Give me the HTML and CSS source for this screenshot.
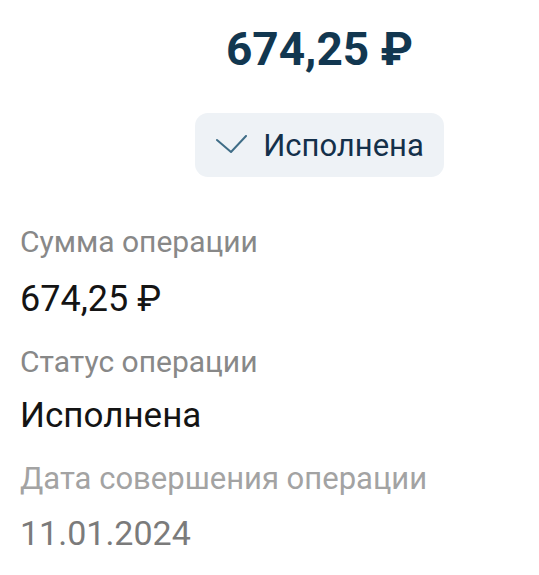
FILE: index.html
```html
<!DOCTYPE html>
<html lang="ru">

<head>
    <meta charset="UTF-8">
    <meta name="viewport" content="width=device-width, initial-scale=1.0">
    <title>Операция</title>
    <link rel="stylesheet" href="styles.css">
</head>

<body>
    <div class="header">
        <div class="amount">674,25 ₽</div>
        <div class="badge">
            <svg class="badge-icon" width="32" height="20" viewBox="0 0 32 20">
                <polyline points="1,5 15,17 30,1" fill="none" stroke="#3f6d87" stroke-width="2"
                    stroke-linecap="round" stroke-linejoin="round" />
            </svg>
            <span>Исполнена</span>
        </div>
    </div>

    <div class="fields">
        <div class="field">
            <div class="label">Сумма операции</div>
            <div class="value value-sum">674,25 ₽</div>
        </div>
        <div class="field">
            <div class="label">Статус операции</div>
            <div class="value value-text">Исполнена</div>
        </div>
        <div class="field field-faded">
            <div class="label">Дата совершения операции</div>
            <div class="value">11.01.2024</div>
        </div>
    </div>
</body>

</html>
```

FILE: styles.css
```css
body {
    margin: 0;
    background-color: #fff;
    font-family: Roboto, "Noto Sans", sans-serif;
    color: #111;
}

.header {
    padding: 21px 0 0 100px;
    display: flex;
    flex-direction: column;
    align-items: center;
}

.amount {
    font-size: 46px;
    line-height: 56px;
    font-weight: 700;
    color: #123750;
}

.badge {
    margin-top: 36px;
    height: 64px;
    padding: 0 20px 0 21px;
    box-sizing: border-box;
    display: flex;
    align-items: center;
    gap: 15px;
    background-color: #eef2f6;
    border-radius: 13px;
    font-size: 31px;
    color: #14304a;
}

.badge-icon {
    display: block;
}

.fields {
    padding: 0 0 0 20px;
    margin-top: 47px;
    display: flex;
    flex-direction: column;
    gap: 23px;
}

.label {
    font-size: 30px;
    line-height: 36px;
    color: #888;
}

.value {
    margin-top: 13px;
    font-size: 34px;
    line-height: 44px;
    color: #141414;
}

.value-sum {
    margin-top: 17px;
    font-size: 36px;
}

.value-text {
    margin-top: 14px;
    font-size: 35px;
}

.field-faded .label {
    color: #a3a3a3;
    font-size: 31px;
}

.field-faded .value {
    margin-top: 14px;
    color: #7b7b7b;
}
```
